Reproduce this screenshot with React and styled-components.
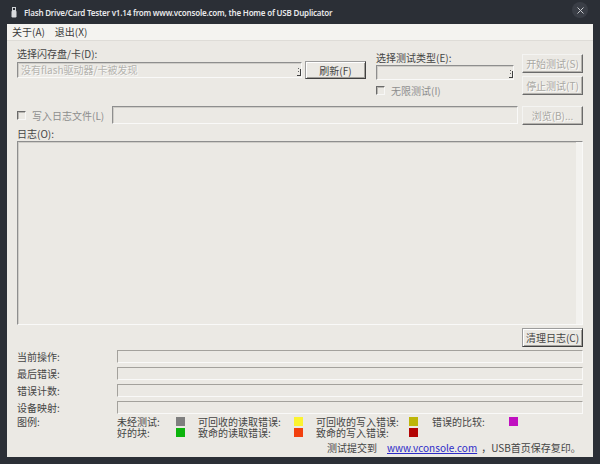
import React from 'react';
import styled, { createGlobalStyle, css } from 'styled-components';

const UI = `"Noto Sans CJK SC", "Noto Sans", sans-serif`;

const Global = createGlobalStyle`
  html, body { margin: 0; padding: 0; background: #2b2f36; }
  body { width: 600px; height: 464px; overflow: hidden; }
`;

const Window = styled.div`
  width: 600px;
  height: 464px;
  background: #2b2f36;
  display: flex;
  flex-direction: column;
`;

const TitleBar = styled.div`
  height: 24px;
  flex: none;
  display: flex;
  align-items: center;
  padding: 0 12px 0 11px;
  color: #e8e8ea;
  font-family: "Noto Sans", sans-serif;
  font-size: 8px;
  font-weight: 600;
  letter-spacing: -0.2px;
`;

const TitleText = styled.span`
  flex: 1;
  margin-left: 7px;
  white-space: nowrap;
`;

const CloseBtn = styled.div`
  width: 16px;
  height: 16px;
  margin-top: -4px;
  border-radius: 50%;
  background: #3a3e46;
  display: flex;
  align-items: center;
  justify-content: center;
`;

const Client = styled.div`
  flex: 1;
  margin: 0 7px 7px 7px;
  background: #ebe9e4;
  display: flex;
  flex-direction: column;
  font-family: ${UI};
  font-size: 10px;
  color: #454545;
`;

const MenuBar = styled.div`
  height: 16px;
  flex: none;
  display: flex;
  align-items: center;
  gap: 10px;
  padding-left: 5px;
  background: #f4f3f0;
  border-bottom: 1px solid #dedcd7;
`;

const MenuItem = styled.span`
  color: #3c3c3c;
  line-height: 16px;
`;

const Body = styled.div`
  flex: 1;
  display: flex;
  flex-direction: column;
  padding: 0 10px;
`;

const TopRow = styled.div`
  display: flex;
  align-items: flex-start;
  margin-top: 6px;
`;

const Group = styled.div`
  display: flex;
  flex-direction: column;
  width: ${p => p.$w}px;
  margin-left: ${p => p.$ml || 0}px;
  padding-top: ${p => p.$pt || 0}px;
  gap: ${p => p.$gap || 0}px;
`;

const Label = styled.div`
  height: 14px;
  line-height: 14px;
  white-space: nowrap;
  color: ${p => (p.$dim ? '#8e8e8e' : '#454545')};
`;

const Line = styled.div`
  display: flex;
  align-items: flex-start;
  gap: ${p => p.$gap || 0}px;
`;

const sunken = css`
  box-sizing: border-box;
  border: 1px solid;
  border-color: #8e8e8e #f9f9f8 #f9f9f8 #8e8e8e;
  box-shadow: inset 1px 1px 0 #cfcdc8;
  background: #ebe9e4;
`;

const Combo = styled.div`
  ${sunken};
  position: relative;
  width: ${p => p.$w}px;
  height: ${p => p.$h}px;
  margin-top: ${p => p.$mt || 0}px;
  padding-left: 3px;
  line-height: ${p => p.$h - 2}px;
  color: #b4b3ae;
  text-shadow: 1px 1px 0 #fafafa;
  white-space: nowrap;
  overflow: hidden;
`;

const Grip = styled.svg`
  position: absolute;
  right: 0;
  bottom: 1px;
`;

const Field = styled.div`
  ${sunken};
  width: ${p => p.$w}px;
  height: ${p => p.$h}px;
  margin-left: ${p => p.$ml || 0}px;
`;

const Btn = styled.div`
  box-sizing: border-box;
  width: 61px;
  height: ${p => p.$h || 19}px;
  margin-left: ${p => p.$ml || 0}px;
  display: flex;
  align-items: center;
  justify-content: center;
  background: #ebe9e4;
  border: 1px solid;
  border-color: ${p => (p.$off ? '#f4f4f2 #6a6a6a #6a6a6a #f4f4f2' : '#9c9c9c #404040 #404040 #9c9c9c')};
  box-shadow: ${p => (p.$off ? 'inset -1px -1px 0 #b4b2ad' : 'inset 1px 1px 0 #ffffff, inset -1px -1px 0 #a2a09b')};
  color: ${p => (p.$off ? '#a9a8a3' : '#454545')};
  text-shadow: ${p => (p.$off ? '1px 1px 0 #fbfbfa' : 'none')};
  white-space: nowrap;
`;

const Check = styled.label`
  display: flex;
  align-items: center;
  gap: 6px;
  height: ${p => p.$h || 12}px;
  width: ${p => p.$w || 'auto'};
  margin-top: ${p => p.$mt || 0}px;
  color: #8e8e8e;
  white-space: nowrap;
`;

const Box = styled.span`
  box-sizing: border-box;
  width: 9px;
  height: 9px;
  flex: none;
  border: 1px solid;
  border-color: #6a6a6a #f7f7f6 #f7f7f6 #6a6a6a;
  box-shadow: inset 1px 1px 0 #b8b6b1;
`;

const LogFileRow = styled.div`
  display: flex;
  align-items: flex-start;
  margin-top: 10px;
`;

const LogLabel = styled(Label)`
  margin-top: 2px;
`;

const LogBox = styled.div`
  ${sunken};
  height: 184px;
  display: flex;
  justify-content: flex-end;
`;

const ScrollGhost = styled.div`
  width: 6px;
  background: #f3f2ef;
`;

const ClearRow = styled.div`
  display: flex;
  justify-content: flex-end;
  margin-top: 3px;
`;

const InfoGrid = styled.div`
  display: grid;
  grid-template-columns: 100px 466px;
  grid-auto-rows: 13px;
  row-gap: 4px;
  margin-top: 3px;
  align-items: center;
`;

const InfoLabel = styled.div`
  line-height: 13px;
  color: #454545;
`;

const InfoField = styled.div`
  box-sizing: border-box;
  height: 13px;
  border: 1px solid;
  border-color: #a3a19c #f9f9f8 #f9f9f8 #a3a19c;
`;

const Legend = styled.div`
  display: grid;
  grid-template-columns: 100px 59px 22px 96px 22px 93px 23px 77px 9px;
  grid-auto-rows: 11px;
  align-items: center;
  margin-top: 2px;
  line-height: 11px;
`;

const LegendText = styled.span`
  display: block;
  height: 11px;
  line-height: 11px;
  white-space: nowrap;
`;

const Swatch = styled.span`
  display: block;
  width: 9px;
  height: 9px;
  background: ${p => p.$c};
`;

const Footer = styled.div`
  height: 19px;
  display: flex;
  align-items: center;
  padding-left: 310px;
  color: #454545;
  white-space: nowrap;
`;

const Link = styled.a`
  color: #2b2bc8;
  text-decoration: underline;
  margin: 0 4px 0 10px;
`;

const UsbIcon = () => (
  <svg width="6" height="11" viewBox="0 0 6 11">
    <rect x="1.5" y="0.5" width="3" height="3" fill="none" stroke="#cfd2d6" strokeWidth="1" />
    <rect x="0.5" y="3.5" width="5" height="7" rx="1.2" fill="#d8dadd" />
  </svg>
);

const ComboGrip = () => (
  <Grip width="4" height="9" viewBox="0 0 4 9">
    <rect x="1" y="1" width="1" height="1" fill="#606060" />
    <rect x="1" y="4" width="1" height="1" fill="#606060" />
    <rect x="3" y="2" width="1" height="7" fill="#404040" />
    <rect x="0" y="8" width="4" height="1" fill="#404040" />
  </Grip>
);

const legend1 = [
  ['未经测试:', '#7f7f7f'],
  ['可回收的读取错误:', '#fbf330'],
  ['可回收的写入错误:', '#bdb60a'],
  ['错误的比较:', '#c010c0'],
];
const legend2 = [
  ['好的块:', '#0cb40c'],
  ['致命的读取错误:', '#f2400e'],
  ['致命的写入错误:', '#b30505'],
];

export default function App() {
  return (
    <Window>
      <Global />
      <TitleBar>
        <UsbIcon />
        <TitleText>Flash Drive/Card Tester v1.14 from www.vconsole.com, the Home of USB Duplicator</TitleText>
        <CloseBtn>
          <svg width="7" height="7" viewBox="0 0 7 7">
            <path d="M0.5 0.5 L6.5 6.5 M6.5 0.5 L0.5 6.5" stroke="#c9cbcf" strokeWidth="1" />
          </svg>
        </CloseBtn>
      </TitleBar>
      <Client>
        <MenuBar>
          <MenuItem>关于(A)</MenuItem>
          <MenuItem>退出(X)</MenuItem>
        </MenuBar>
        <Body>
          <TopRow>
            <Group $w={349}>
              <Label>选择闪存盘/卡(D):</Label>
              <Line $gap={3}>
                <Combo $w={285} $h={16} $mt={1}>
                  没有flash驱动器/卡被发现
                  <ComboGrip />
                </Combo>
                <Btn $h={18}>刷新(F)</Btn>
              </Line>
            </Group>
            <Group $w={138} $ml={10} $pt={4}>
              <Label>选择测试类型(E):</Label>
              <Combo $w={138} $h={15}>
                <ComboGrip />
              </Combo>
              <Check $h={12} $mt={4}>
                <Box />
                无限测试(I)
              </Check>
            </Group>
            <Group $w={61} $ml={8} $pt={7} $gap={3}>
              <Btn $off>开始测试(S)</Btn>
              <Btn $off>停止测试(T)</Btn>
            </Group>
          </TopRow>
          <LogFileRow>
            <Check $h={18} $w="95px">
              <Box />
              写入日志文件(L)
            </Check>
            <Field $w={406} $h={18} />
            <Btn $off $ml={4}>浏览(B)...</Btn>
          </LogFileRow>
          <LogLabel>日志(O):</LogLabel>
          <LogBox>
            <ScrollGhost />
          </LogBox>
          <ClearRow>
            <Btn>清理日志(C)</Btn>
          </ClearRow>
          <InfoGrid>
            <InfoLabel>当前操作:</InfoLabel>
            <InfoField />
            <InfoLabel>最后错误:</InfoLabel>
            <InfoField />
            <InfoLabel>错误计数:</InfoLabel>
            <InfoField />
            <InfoLabel>设备映射:</InfoLabel>
            <InfoField />
          </InfoGrid>
          <Legend>
            <LegendText>图例:</LegendText>
            {legend1.map(([t, c]) => (
              <React.Fragment key={t}>
                <LegendText>{t}</LegendText>
                <Swatch $c={c} />
              </React.Fragment>
            ))}
            <span />
            {legend2.map(([t, c]) => (
              <React.Fragment key={t}>
                <LegendText>{t}</LegendText>
                <Swatch $c={c} />
              </React.Fragment>
            ))}
          </Legend>
          <Footer>
            测试提交到
            <Link href="#">www.vconsole.com</Link>
            ，USB首页保存复印。
          </Footer>
        </Body>
      </Client>
    </Window>
  );
}
